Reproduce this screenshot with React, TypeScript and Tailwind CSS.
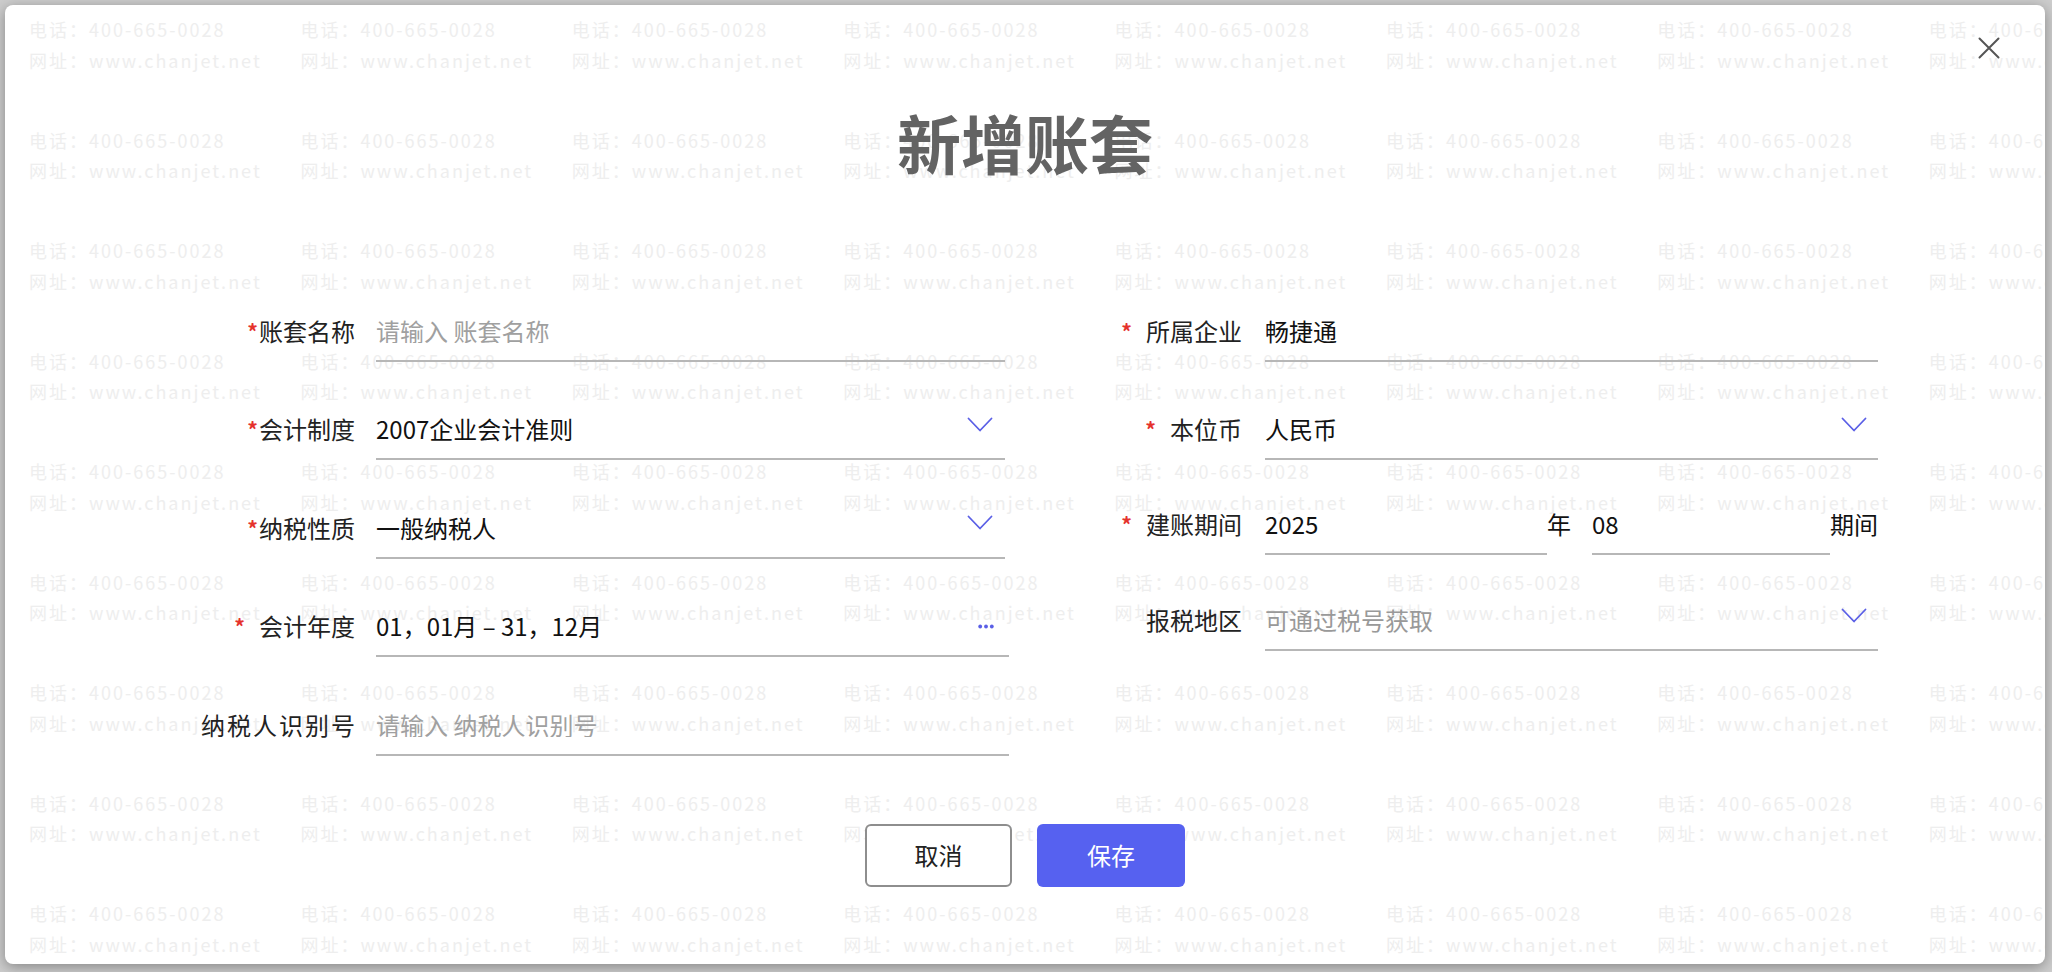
import { ReactNode } from "react";

const FONT = "font-['Noto_Sans_CJK_SC','Noto_Sans',sans-serif]";

// watermark tiles repeated over the dialog
const tiles = Array.from({ length: 72 }, (_, i) => i);

function Chevron() {
  return (
    <svg
      width="26"
      height="15"
      viewBox="0 0 26 15"
      fill="none"
      stroke="#5a5fe6"
      strokeWidth={1.8}
      strokeLinecap="round"
      strokeLinejoin="round"
      className="-mt-[10px] shrink-0"
    >
      <path d="M1.5 1.5 13 13.5 24.5 1.5" />
    </svg>
  );
}

function MoreDots() {
  return (
    <svg width="16" height="5" viewBox="0 0 16 5" fill="#5a5fe6" className="shrink-0">
      <circle cx="2.2" cy="2.5" r="1.9" />
      <circle cx="8" cy="2.5" r="1.9" />
      <circle cx="13.8" cy="2.5" r="1.9" />
    </svg>
  );
}

function Label({
  text,
  required,
  starGap = "mr-[1px]",
  className = "",
}: {
  text: string;
  required?: boolean;
  starGap?: string;
  className?: string;
}) {
  return (
    <div className="w-[175px] shrink-0 pb-[19px] flex justify-end items-center text-[24px] leading-[24px] text-[#222]">
      {required && (
        <span className={`text-[21px] leading-[16px] font-bold text-[#e5322d] ${starGap}`}>*</span>
      )}
      <span className={className}>{text}</span>
    </div>
  );
}

function Row({ children, className = "" }: { children: ReactNode; className?: string }) {
  return <div className={`flex h-[98.5px] items-end ${className}`}>{children}</div>;
}

export default function App() {
  return (
    <div className={`w-[2052px] h-[972px] bg-[#cdcdcd] pt-[5px] pl-[5px] overflow-hidden ${FONT}`}>
      <div className="relative w-[2040px] h-[959px] bg-white rounded-lg overflow-hidden shadow-[0_3px_14px_rgba(0,0,0,0.35)]">
        {/* watermark */}
        <div className="absolute inset-0 pointer-events-none select-none pl-[24px] pt-[9px]">
          <div className="grid grid-cols-[repeat(8,271.4px)] auto-rows-[110.5px]">
            {tiles.map((i) => (
              <div key={i} className="text-[18px] leading-[30.5px] tracking-[2px] text-[#eeeeee] whitespace-nowrap">
                <div>电话：400-665-0028</div>
                <div>网址：www.chanjet.net</div>
              </div>
            ))}
          </div>
        </div>

        {/* close */}
        <button className="absolute right-[45px] top-[32px] w-[22px] h-[22px]">
          <svg width="22" height="22" viewBox="0 0 22 22" stroke="#555" strokeWidth={2} strokeLinecap="round">
            <path d="M1.5 1.5 20.5 20.5M20.5 1.5 1.5 20.5" />
          </svg>
        </button>

        <div className="relative flex flex-col">
          <h1 className="pt-[104px] text-center text-[64px] leading-[64px] font-bold text-[#636363]">新增账套</h1>

          {/* form */}
          <div className="mt-[90px] pl-[175px] flex">
            {/* left column */}
            <div className="w-[829px] flex flex-col">
              <Row>
                <Label text="账套名称" required />
                <div className="ml-[21px] w-[629px] border-b-2 border-[#b7b7b7] pb-[17px] flex items-center">
                  <input
                    type="text"
                    placeholder="请输入 账套名称"
                    className="w-full h-[24px] bg-transparent outline-none text-[24px] leading-[24px] text-[#111] placeholder:text-[#a0a0a0]"
                  />
                </div>
              </Row>
              <Row>
                <Label text="会计制度" required />
                <div className="ml-[21px] w-[629px] border-b-2 border-[#b7b7b7] pb-[17px] pr-[12px] flex items-center justify-between">
                  <span className="text-[24px] leading-[24px] text-[#111]">2007企业会计准则</span>
                  <Chevron />
                </div>
              </Row>
              <Row>
                <Label text="纳税性质" required />
                <div className="ml-[21px] w-[629px] border-b-2 border-[#b7b7b7] pb-[17px] pr-[12px] flex items-center justify-between">
                  <span className="text-[24px] leading-[24px] text-[#111]">一般纳税人</span>
                  <Chevron />
                </div>
              </Row>
              <Row>
                <Label text="会计年度" required starGap="mr-[14px]" />
                <div className="ml-[21px] w-[633px] border-b-2 border-[#b7b7b7] pb-[17px] pr-[15px] flex items-center justify-between">
                  <span className="text-[24px] leading-[24px] text-[#111]">01，01月 – 31，12月</span>
                  <MoreDots />
                </div>
              </Row>
              <Row>
                <Label text="纳税人识别号" className="tracking-[2px] -mr-[2px]" />
                <div className="ml-[21px] w-[633px] border-b-2 border-[#b7b7b7] pb-[17px] flex items-center">
                  <input
                    type="text"
                    placeholder="请输入 纳税人识别号"
                    className="w-full h-[24px] bg-transparent outline-none text-[24px] leading-[24px] text-[#111] placeholder:text-[#a0a0a0]"
                  />
                </div>
              </Row>
            </div>

            {/* right column */}
            <div className="ml-[58px] w-[811px] flex flex-col">
              <Row>
                <Label text="所属企业" required starGap="mr-[14px]" />
                <div className="ml-[23px] w-[613px] border-b-2 border-[#b7b7b7] pb-[17px] flex items-center">
                  <span className="text-[24px] leading-[24px] text-[#111]">畅捷通</span>
                </div>
              </Row>
              <Row>
                <Label text="本位币" required starGap="mr-[14px]" />
                <div className="ml-[23px] w-[613px] border-b-2 border-[#b7b7b7] pb-[17px] pr-[11px] flex items-center justify-between">
                  <span className="text-[24px] leading-[24px] text-[#111]">人民币</span>
                  <Chevron />
                </div>
              </Row>
              <Row className="pb-[4px]">
                <Label text="建账期间" required starGap="mr-[14px]" />
                <div className="ml-[23px] w-[613px] flex items-end text-[24px] leading-[24px] text-[#111]">
                  <div className="w-[282px] border-b-2 border-[#b7b7b7] pb-[17px]">2025</div>
                  <span className="w-[45px] pb-[19px]">年</span>
                  <div className="w-[238px] border-b-2 border-[#b7b7b7] pb-[17px]">08</div>
                  <span className="ml-auto pb-[19px]">期间</span>
                </div>
              </Row>
              <Row className="pb-[6px]">
                <Label text="报税地区" />
                <div className="ml-[23px] w-[613px] border-b-2 border-[#b7b7b7] pb-[17px] pr-[11px] flex items-center justify-between">
                  <span className="text-[24px] leading-[24px] text-[#999]">可通过税号获取</span>
                  <Chevron />
                </div>
              </Row>
            </div>
          </div>

          {/* actions */}
          <div className="mt-[68px] flex justify-center gap-[25px]">
            <button className="w-[147px] h-[63px] rounded-md border-2 border-[#8e8e8e] bg-white text-[24px] text-[#222]">
              取消
            </button>
            <button className="w-[148px] h-[63px] rounded-md bg-[#5661f0] text-[24px] text-white">保存</button>
          </div>
        </div>
      </div>
    </div>
  );
}
